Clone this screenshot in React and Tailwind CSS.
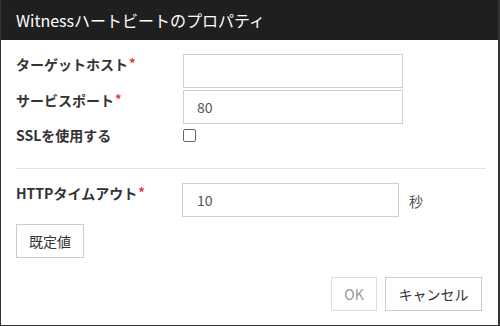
export default function App() {
  const font = { fontFamily: '"Noto Sans CJK JP", "Noto Sans", sans-serif' };

  const Req = () => <sup className="text-[#e0393e] text-[13px] font-bold ml-[1px] relative -top-[2px]">*</sup>;

  return (
    <div style={font} className="w-[500px] h-[326px] bg-white border-l border-r-2 border-b border-[#333] flex flex-col text-[#333]">
      {/* タイトルバー */}
      <div className="h-[40px] shrink-0 bg-[#1f1f1f] text-white text-[16px] flex items-center pl-[15px]">
        Witnessハートビートのプロパティ
      </div>

      <div className="flex flex-col pl-[15px] pr-[13px] pt-[14px]">
        {/* ターゲットホスト */}
        <div className="flex items-start">
          <div className="w-[167px] text-[14px] font-bold leading-5">ターゲットホスト<Req /></div>
          <div className="w-[220px] h-[34px] border border-[#cdd0d4]" />
        </div>

        {/* サービスポート */}
        <div className="flex items-start mt-[2px]">
          <div className="w-[167px] text-[14px] font-bold leading-5">サービスポート<Req /></div>
          <div className="w-[220px] h-[34px] border border-[#cdd0d4] flex items-center pl-[13px] text-[14px] text-[#555]">80</div>
        </div>

        {/* SSL */}
        <div className="flex items-center h-[22px]">
          <div className="w-[167px] text-[14px] font-bold leading-5">SSLを使用する</div>
          <div className="w-[13px] h-[13px] border border-[#666] rounded-[2px] bg-white" />
        </div>

        <div className="h-px bg-[#e3e3e3] mt-[22px] w-[470px]" />

        {/* HTTPタイムアウト */}
        <div className="flex items-start mt-[14px]">
          <div className="w-[166px] text-[14px] font-bold leading-5">HTTPタイムアウト<Req /></div>
          <div className="w-[217px] h-[34px] border border-[#cdd0d4] flex items-center pl-[14px] text-[14px] text-[#555]">10</div>
          <div className="ml-[10px] text-[14px] text-[#555] self-center pt-[2px]">秒</div>
        </div>

        <div className="mt-[7px]">
          <button className="w-[68px] h-[34px] border border-[#ccc] bg-white text-[14px] text-[#333]">既定値</button>
        </div>
      </div>

      <div className="flex justify-end gap-[8px] pr-[16px] mt-[19px]">
        <button className="w-[46px] h-[34px] border border-[#ddd] bg-white text-[14px] text-[#999]">OK</button>
        <button className="w-[97px] h-[34px] border border-[#ccc] bg-white text-[14px] text-[#333]">キャンセル</button>
      </div>
    </div>
  );
}
